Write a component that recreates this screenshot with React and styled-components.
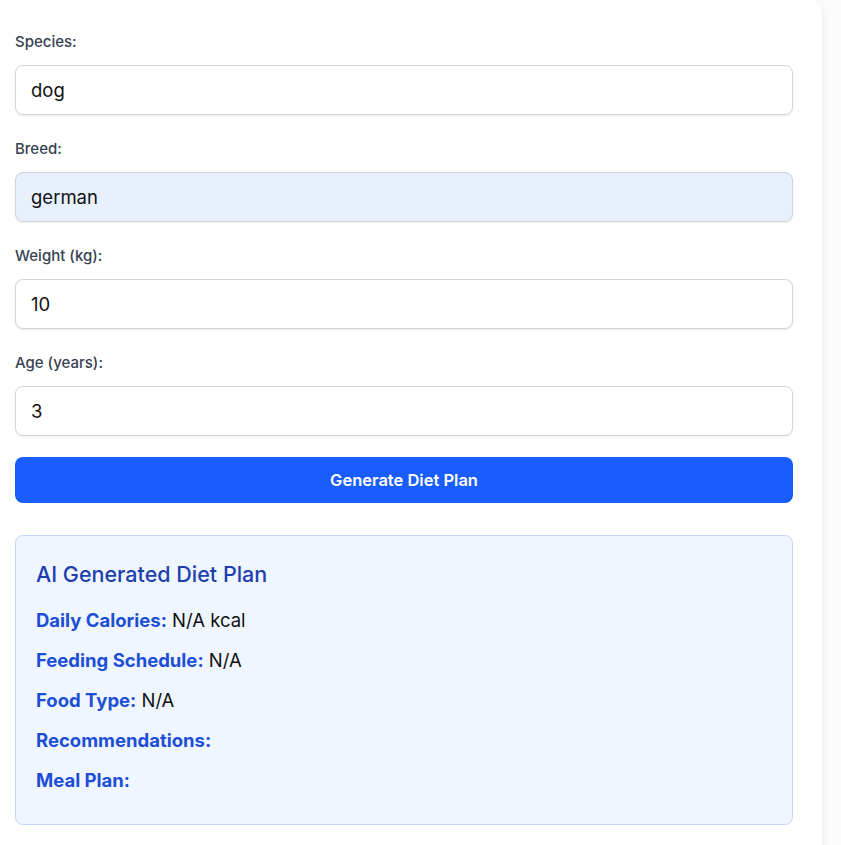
import React from 'react';
import styled, { createGlobalStyle } from 'styled-components';

const GlobalStyle = createGlobalStyle`
    html, body {
        margin: 0;
        padding: 0;
        background: #ffffff;
        font-family: Inter, "Open Sans", sans-serif;
    }
    * {
        box-sizing: border-box;
    }
`;

const Page = styled.div`
    width: 841px;
    height: 845px;
    overflow: hidden;
    background: #fcfcfc;
`;

const Card = styled.div`
    width: 822px;
    min-height: 900px;
    background: #ffffff;
    border-radius: 0 12px 12px 0;
    box-shadow: 0 2px 10px rgba(0, 0, 0, 0.07);
    padding: 32px 29px 0 15px;
`;

const Field = styled.div`
    display: flex;
    flex-direction: column;
    margin-bottom: 24px;
`;

const Label = styled.label`
    font-size: 15px;
    line-height: 20px;
    font-weight: 500;
    color: #374151;
    margin-bottom: 13px;
`;

const Input = styled.input`
    height: 50px;
    width: 100%;
    border: 1px solid #d1d5db;
    border-radius: 8px;
    padding: 0 15px;
    font-family: inherit;
    font-size: 18.5px;
    color: #111111;
    background: ${(p) => (p.$filled ? '#e8f0fe' : '#ffffff')};
    box-shadow: 0 1px 2px rgba(0, 0, 0, 0.08);
    outline: none;
`;

const Button = styled.button`
    width: 100%;
    height: 46px;
    margin-top: -3px;
    border: none;
    border-radius: 8px;
    background: #1a5dff;
    color: #ffffff;
    font-family: inherit;
    font-size: 16.5px;
    font-weight: 600;
    cursor: pointer;
`;

const Result = styled.div`
    margin-top: 32px;
    background: #eff6ff;
    border: 1px solid #c3d7f5;
    border-radius: 8px;
    padding: 24px 20px 16px;
`;

const ResultTitle = styled.h3`
    margin: 0 0 20px;
    font-size: 21.5px;
    line-height: 28px;
    font-weight: 500;
    color: #1e40af;
`;

const Line = styled.p`
    margin: 0 0 16px;
    font-size: 18.5px;
    line-height: 24px;
    color: #111111;
`;

const Key = styled.strong`
    font-weight: 700;
    color: #1d4ed8;
`;

const fields = [
    { label: 'Species:', value: 'dog' },
    { label: 'Breed:', value: 'german', filled: true },
    { label: 'Weight (kg):', value: '10' },
    { label: 'Age (years):', value: '3' },
];

const plan = [
    { key: 'Daily Calories:', value: 'N/A kcal' },
    { key: 'Feeding Schedule:', value: 'N/A' },
    { key: 'Food Type:', value: 'N/A' },
    { key: 'Recommendations:', value: '' },
    { key: 'Meal Plan:', value: '' },
];

const App = () => {
    return (
        <Page>
            <GlobalStyle />
            <Card>
                {fields.map((f) => (
                    <Field key={f.label}>
                        <Label>{f.label}</Label>
                        <Input defaultValue={f.value} $filled={f.filled} />
                    </Field>
                ))}
                <Button>Generate Diet Plan</Button>
                <Result>
                    <ResultTitle>AI Generated Diet Plan</ResultTitle>
                    {plan.map((p) => (
                        <Line key={p.key}>
                            <Key>{p.key}</Key>
                            {p.value && ' ' + p.value}
                        </Line>
                    ))}
                </Result>
            </Card>
        </Page>
    );
};

export default App;
